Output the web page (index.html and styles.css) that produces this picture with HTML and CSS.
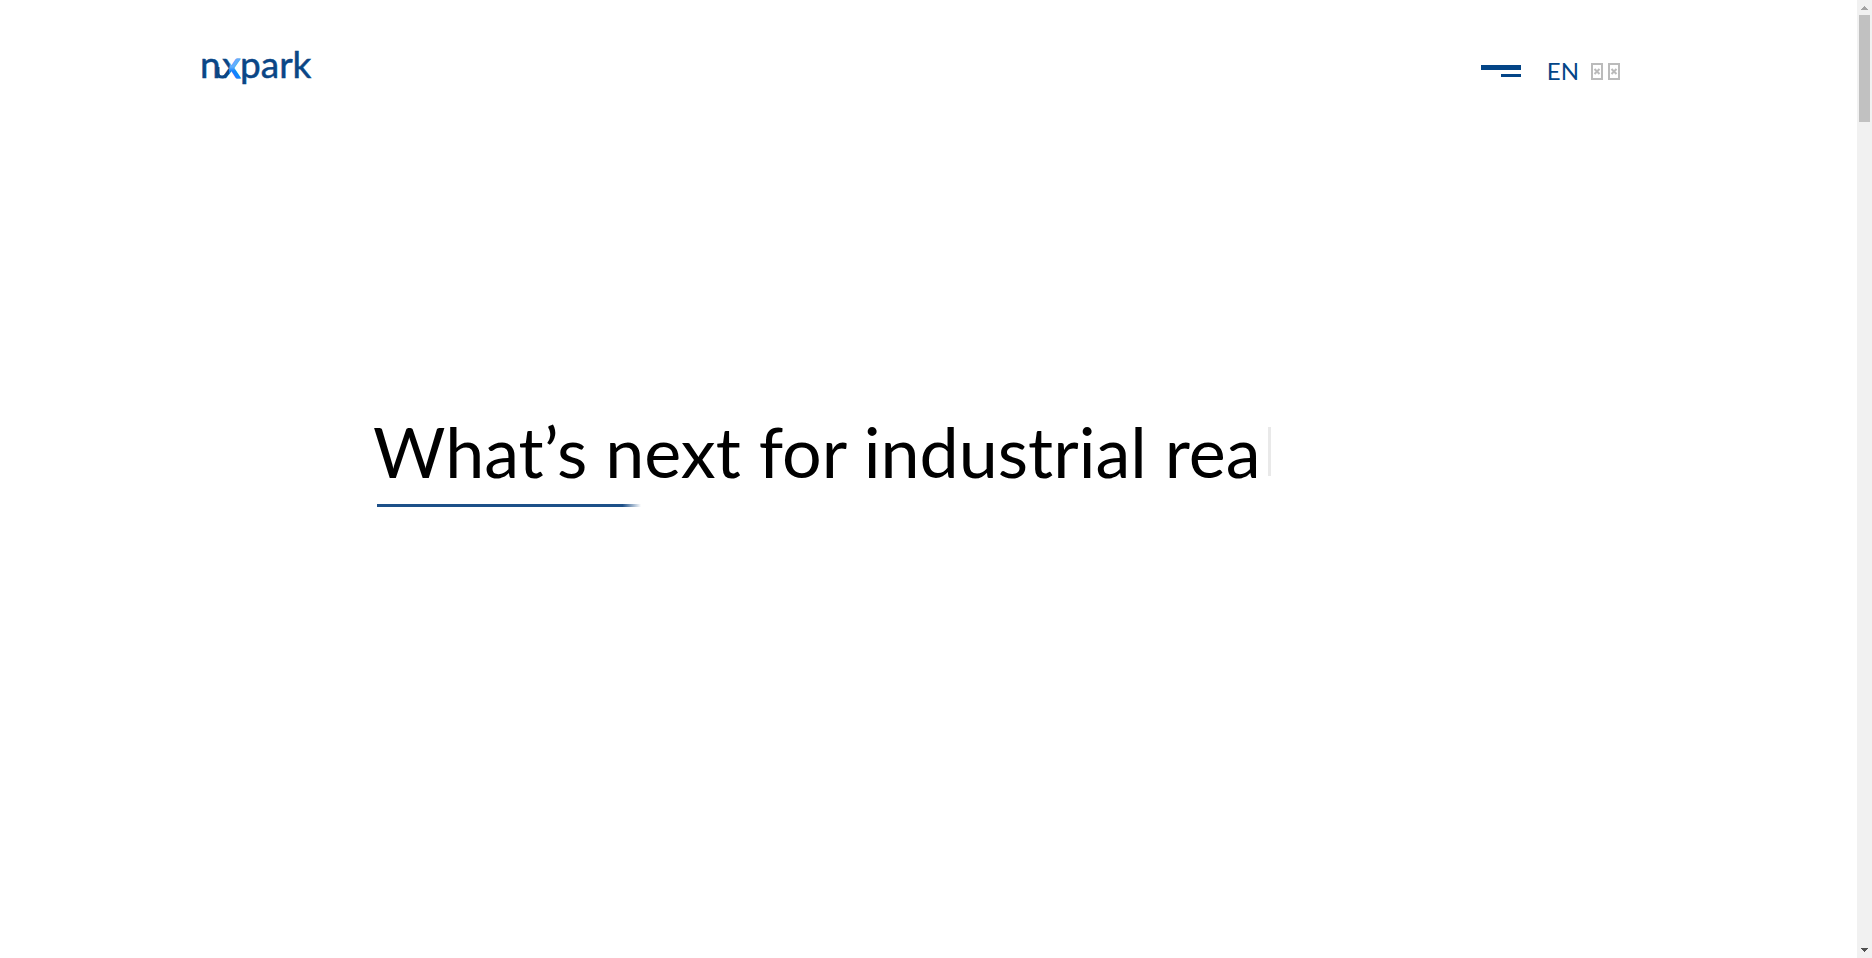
FILE: index.html
```html
<!DOCTYPE html>
<html lang="en">
<head>
<meta charset="utf-8">
<meta name="viewport" content="width=device-width, initial-scale=1">
<title>nxpark</title>
<link rel="stylesheet" href="styles.css">
</head>
<body>
<div class="page">
  <header class="header">
    <a class="logo" href="#" aria-label="nxpark home">
      <svg class="logo-mark" width="116" height="40" viewBox="0 0 116 40">
        <defs>
          <linearGradient id="x-fill" gradientUnits="userSpaceOnUse" x1="0" y1="17" x2="0" y2="21">
            <stop offset="0" stop-color="#62b0ff"/>
            <stop offset="1" stop-color="#1283ff"/>
          </linearGradient>
          <clipPath id="x-right"><path d="M31 0h10v40h-13v-20z"/></clipPath>
        </defs>
        <path class="logo-link" d="M17 17v6q0 4 4 4q3 0 5-3l3-4"/>
        <text class="logo-text" x="-1" y="28">n</text>
        <text class="logo-text" x="21" y="28">x</text>
        <text class="logo-text logo-x" x="21" y="28" clip-path="url(#x-right)" aria-hidden="true">x</text>
        <text class="logo-text" x="39" y="28">park</text>
      </svg>
    </a>
    <nav class="nav">
      <button class="menu" type="button" aria-label="Menu"><span class="bar"></span><span class="bar bar-short"></span></button>
      <a class="lang" href="#">EN</a>
      <a class="lang-alt" href="#" aria-label="Chinese">
        <svg width="29" height="17" viewBox="0 0 29 17">
          <g id="box"><path d="M1 1h10v15h-10z"/><path class="cross" d="M3.500 6l5 5m0-5l-5 5"/></g>
          <use href="#box" x="17"/>
        </svg>
      </a>
    </nav>
  </header>
  <main class="hero">
    <h1 class="title"><span class="accent">What’s next</span> for industrial rea<span class="caret"></span></h1>
  </main>
</div>
<div class="scrollbar" aria-hidden="true">
  <svg class="arrow" width="7" height="4" viewBox="0 0 7 4"><path d="M3 0h1v1h1v1h1v1h1v1h-7v-1h1v-1h1v-1h1z"/></svg>
  <div class="thumb"></div>
  <svg class="arrow arrow-down" width="7" height="4" viewBox="0 0 7 4"><path d="M0 0h7v1h-1v1h-1v1h-1v1h-1v-1h-1v-1h-1v-1h-1z"/></svg>
</div>
</body>
</html>
```
FILE: styles.css
```css
* { box-sizing: border-box; }
body { margin: 0; display: flex; min-height: 100vh; background: #fff; color: #000; font-family: Lato, "Open Sans", sans-serif; }
.page { flex: 1; display: flex; flex-direction: column; }
.header { display: flex; justify-content: space-between; align-items: center; height: 140px; padding: 0 237px 0 201px; }
.logo { display: flex; }
.logo-mark { overflow: visible; }
.logo-text { font-size: 37px; font-weight: 400; fill: #0a4686; stroke: #0a4686; stroke-width: 0.5; }
.logo-x { fill: url(#x-fill); stroke: url(#x-fill); stroke-width: 1; }
.logo-link { fill: none; stroke: #0a4686; stroke-width: 3; }
.nav { display: flex; align-items: center; padding-top: 2px; }
.menu { display: flex; flex-direction: column; align-items: flex-end; gap: 4px; width: 40px; padding: 0; border: 0; background: none; }
.bar { width: 40px; height: 5px; background: #034587; }
.bar-short { width: 20px; height: 3px; }
.lang { margin-left: 26px; color: #034587; font-size: 24px; line-height: 30px; text-decoration: none; }
.lang-alt { display: flex; margin-left: 12px; padding-top: 1px; fill: none; stroke: #bbb; stroke-width: 2; }
.hero { padding: 266px 0 0 373px; }
.title { display: flex; margin: 0; font-size: 70px; font-weight: 400; line-height: 90px; white-space: pre; }
.accent { position: relative; }
.accent::after { content: ""; position: absolute; left: 4px; bottom: -11px; height: 3px; width: 264px; background: linear-gradient(90deg, #1d5089 93%, transparent); }
.caret { align-self: center; width: 3px; height: 49px; margin-left: 8px; background: #e9e9e9; }
.scrollbar { display: flex; flex-direction: column; align-items: center; width: 15px; padding: 6px 0; background: #f1f1f1; }
.thumb { width: 11px; height: 107px; margin-top: 5px; background: #c1c1c1; }
.arrow { fill: #a3a3a3; }
.arrow-down { margin-top: auto; fill: #505050; }
```
